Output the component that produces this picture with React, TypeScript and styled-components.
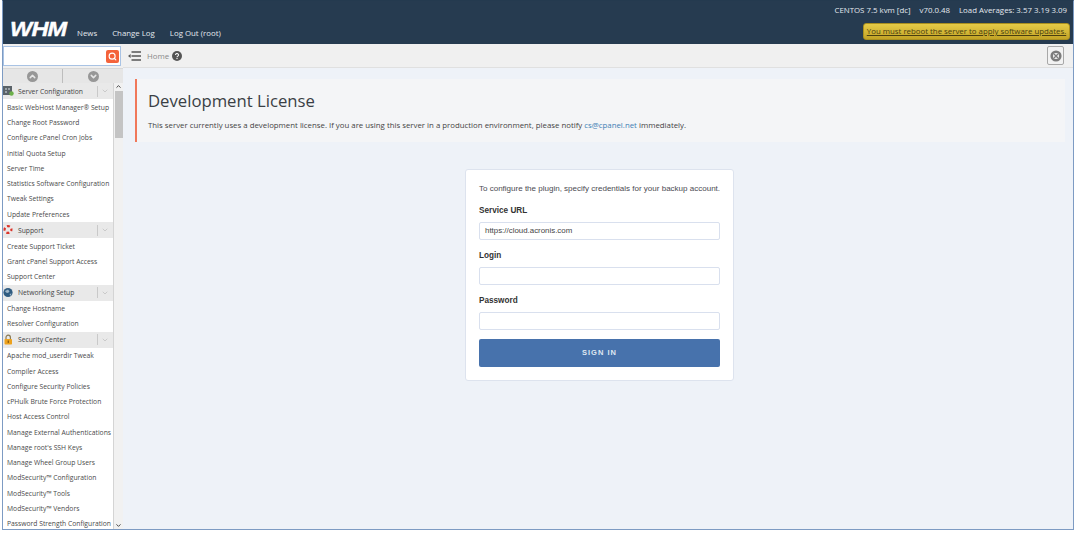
import React from "react";
import styled, { createGlobalStyle } from "styled-components";
import { Search, ChevronUp, ChevronDown } from "lucide-react";

const Global = createGlobalStyle`
  html, body { margin: 0; padding: 0; background: #fff; overflow: hidden; }
  * { box-sizing: border-box; }
`;

const Frame = styled.div`
  margin-left: 2px;
  width: 1072px;
  height: 530px;
  border: 1px solid #7d9bc3;
  border-top-color: #243a4f;
  display: flex;
  flex-direction: column;
  font-family: "Open Sans", sans-serif;
  overflow: hidden;
  background: #eef2f8;
`;

const Header = styled.header`
  height: 43px;
  flex: none;
  background: #263b50;
  display: flex;
  justify-content: space-between;
  padding: 0 3px 0 7px;
  color: #e8edf2;
`;
const Brand = styled.div`
  display: flex;
  align-items: flex-end;
  padding-bottom: 5px;
`;
const Logo = styled.span`
  font-family: "Liberation Sans", sans-serif;
  font-style: italic;
  font-weight: 700;
  font-size: 21px;
  line-height: 24px;
  color: #fff;
  display: inline-block;
  width: 57px;
  letter-spacing: -0.7px;
  margin-right: 10px;
  margin-bottom: -2px;
  -webkit-text-stroke: 0.4px #fff;
  transform: scaleX(1.12);
  transform-origin: left center;
`;
const NavLink = styled.a`
  font-size: 7.85px;
  line-height: 12px;
  margin-right: 15px;
  color: #e3e8ee;
`;
const HeaderRight = styled.div`
  display: flex;
  flex-direction: column;
  align-items: flex-end;
  padding-top: 3px;
`;
const Stats = styled.div`
  font-size: 7.85px;
  line-height: 12px;
  padding-right: 3px;
  display: flex;
  gap: 9px;
  color: #e3e8ee;
`;
const Notice = styled.a`
  margin-top: 7px;
  height: 17px;
  width: 207px;
  border-radius: 3px;
  border: 1px solid #a98f1f;
  background: linear-gradient(#e6cb47, #c2a326);
  color: #4a3f10;
  font-size: 7.85px;
  line-height: 15px;
  text-decoration: underline;
  text-align: center;
  white-space: nowrap;
`;

const Body = styled.div`
  flex: 1;
  min-height: 0;
  display: flex;
`;
const Sidebar = styled.aside`
  width: 120px;
  flex: none;
  display: flex;
  flex-direction: column;
  background: #f2f2f2;
`;
const SearchRow = styled.div`
  height: 24px;
  flex: none;
  padding: 2px 3px 2px 0;
  background: #f0f0f0;
`;
const SearchBox = styled.div`
  height: 20px;
  background: #fff;
  border: 1px solid #a9c3e4;
  display: flex;
  align-items: center;
  justify-content: flex-end;
  padding-right: 1px;
  width: 118px;
`;
const SearchButton = styled.span`
  width: 13px;
  height: 13px;
  border-radius: 2px;
  background: #f4623a;
  color: #fff;
  display: flex;
  align-items: center;
  justify-content: center;
`;
const CollapseBar = styled.div`
  height: 15px;
  flex: none;
  display: grid;
  grid-template-columns: 59px 61px;
  background: #e6e6e6;
  border-top: 1px solid #d8d8d8;
`;
const CollapseCell = styled.div<{ $divider?: boolean }>`
  display: flex;
  align-items: center;
  justify-content: center;
  border-left: ${(p) => (p.$divider ? "1px solid #bdbdbd" : "none")};
`;
const Round = styled.span`
  width: 11px;
  height: 11px;
  border-radius: 50%;
  background: #979797;
  color: #e6e6e6;
  display: flex;
  align-items: center;
  justify-content: center;
`;
const ListWrap = styled.div`
  flex: 1;
  min-height: 0;
  display: flex;
`;
const List = styled.nav`
  width: 111px;
  flex: none;
  background: #fff;
  border-right: 1px solid #d4d4d4;
  overflow: hidden;
`;
const Track = styled.div`
  width: 9px;
  flex: none;
  background: #f1f1f1;
  display: flex;
  flex-direction: column;
  align-items: center;
  color: #333;
`;
const Thumb = styled.div`
  width: 8px;
  height: 47px;
  background: #c4c4c4;
  margin-top: 1px;
`;
const TrackGap = styled.div`
  flex: 1;
`;
const GroupHead = styled.div`
  height: 16px;
  display: flex;
  align-items: center;
  background: #e9e9e9;
  color: #444;
  font-size: 6.75px;
  position: relative;
  padding-left: 15px;
  padding-right: 1px;
  margin-top: 0.3px;
  margin-bottom: 0.5px;
  white-space: nowrap;
`;
const GroupIcon = styled.span`
  position: absolute;
  left: 0;
  top: 2px;
  width: 11px;
  height: 11px;
  display: flex;
`;
const GroupChevron = styled.span`
  margin-left: auto;
  width: 15px;
  height: 11px;
  border-left: 1px solid #c9c9c9;
  display: flex;
  align-items: center;
  justify-content: center;
  color: #aaa;
`;
const Item = styled.a`
  display: block;
  height: 15.25px;
  line-height: 15.25px;
  font-size: 6.75px;
  padding-left: 4px;
  color: #4a4a4a;
  white-space: nowrap;
`;

const Main = styled.main`
  flex: 1;
  min-width: 0;
  display: flex;
  flex-direction: column;
`;
const Crumbs = styled.div`
  height: 24px;
  flex: none;
  background: #f0f0f0;
  border-bottom: 1px solid #e0e0e0;
  display: flex;
  align-items: center;
  padding: 0 9px 0 5px;
`;
const CrumbHome = styled.span`
  font-size: 7.85px;
  color: #8a8a8a;
  margin-left: 6px;
  margin-right: 3px;
`;
const CloseBtn = styled.span`
  margin-left: auto;
  width: 17px;
  height: 19px;
  border: 1px solid #a8a8a8;
  border-radius: 2px;
  background: #f2f2f2;
  display: flex;
  align-items: center;
  justify-content: center;
`;
const Content = styled.div`
  padding: 11px 8px 0 12px;
  flex: 1;
`;
const Banner = styled.section`
  height: 63px;
  background: #f4f5f7;
  border-left: 2px solid #f0785a;
  padding: 10px 0 0 11px;
  color: #333;
`;
const Title = styled.h1`
  margin: 0;
  font-weight: 400;
  font-size: 16.7px;
  line-height: 24px;
  color: #3a3f45;
`;
const BannerText = styled.p`
  margin: 6px 0 0;
  font-size: 7.83px;
  line-height: 12px;
  color: #444;
`;
const Mail = styled.a`
  color: #3f7fb5;
`;
const Card = styled.form`
  margin: 27px 0 0 330px;
  width: 269px;
  height: 212px;
  background: #fff;
  border: 1px solid #dde3ee;
  border-radius: 3px;
  padding: 13px 13px 0;
  font-family: "Liberation Sans", sans-serif;
`;
const Hint = styled.p`
  margin: 0;
  font-size: 8.03px;
  line-height: 12px;
  color: #4a4a52;
  white-space: nowrap;
`;
const Label = styled.div<{ $first?: boolean }>`
  margin-top: ${(p) => (p.$first ? "8.5px" : "8.5px")};
  font-size: 8.2px;
  line-height: 13px;
  font-weight: 700;
  color: #333;
`;
const Field = styled.div`
  margin-top: 5.5px;
  height: 18px;
  border: 1px solid #d9e0ee;
  border-radius: 2px;
  background: #fff;
  font-size: 7.9px;
  line-height: 16px;
  padding-left: 5px;
  color: #444;
`;
const Submit = styled.button`
  display: block;
  width: 100%;
  height: 27.5px;
  margin-top: 9px;
  border: none;
  border-radius: 2px;
  background: #4772ac;
  color: #dfe7f2;
  font-family: "Liberation Sans", sans-serif;
  font-size: 7.5px;
  font-weight: 700;
  letter-spacing: 1px;
  padding: 0;
`;

const GridIcon = () => (
  <svg width="11" height="11" viewBox="0 0 11 11">
    <rect x="0" y="1" width="9" height="9" fill="#5a6268" />
    <rect x="2" y="3" width="2" height="2" fill="#9aa2a8" />
    <rect x="5" y="3" width="2" height="2" fill="#9aa2a8" />
    <rect x="2" y="6" width="2" height="2" fill="#9aa2a8" />
    <circle cx="8.5" cy="8.5" r="2.2" fill="#6cb04a" />
  </svg>
);
const BuoyIcon = () => (
  <svg width="11" height="11" viewBox="0 0 11 11">
    <circle cx="5" cy="5.5" r="3.4" fill="none" stroke="#efe6e6" strokeWidth="2.2" />
    <circle cx="5" cy="5.5" r="3.4" fill="none" stroke="#d9352b" strokeWidth="2.2" strokeDasharray="3 2.34" strokeDashoffset="1.5" />
  </svg>
);
const GlobeIcon = () => (
  <svg width="11" height="11" viewBox="0 0 11 11">
    <circle cx="5" cy="5.5" r="4.6" fill="#2f5b80" />
    <path d="M2 4 L5 2.5 L6.5 4.5 L5 6 L3 5.5 Z" fill="#9fb6c8" />
    <path d="M6.5 7 L8.5 6.5 L7.5 9 Z" fill="#9fb6c8" />
  </svg>
);
const LockIcon = () => (
  <svg width="11" height="11" viewBox="0 0 11 11">
    <path d="M3 5 V3.4 a2.2 2.2 0 0 1 4.4 0 V5" fill="none" stroke="#8a7a55" strokeWidth="1.2" />
    <rect x="1.5" y="5" width="7.5" height="5.5" rx="0.8" fill="#eda21e" />
    <rect x="4.7" y="6.5" width="1.1" height="2.4" fill="#7a4e08" />
  </svg>
);
const MenuIcon = () => (
  <svg width="13" height="10" viewBox="0 0 13 10">
    <path d="M3.5 1 H13 M3.5 5 H13 M3.5 9 H13" stroke="#555" strokeWidth="1.4" />
    <path d="M0 5 L2.6 3 V7 Z" fill="#555" />
  </svg>
);
const HelpIcon = () => (
  <svg width="10" height="10" viewBox="0 0 10 10">
    <circle cx="5" cy="5" r="5" fill="#555" />
    <path d="M3.5 3.9 a1.5 1.4 0 1 1 2.3 1.2 c-0.6 0.4 -0.8 0.6 -0.8 1.2" fill="none" stroke="#fff" strokeWidth="1.1" />
    <rect x="4.45" y="7" width="1.1" height="1.1" fill="#fff" />
  </svg>
);
const CloseIcon = () => (
  <svg width="12" height="12" viewBox="0 0 12 12">
    <circle cx="6" cy="6" r="4.3" fill="none" stroke="#7c7c7c" strokeWidth="2.6" />
    <path d="M4 4 L8 8 M8 4 L4 8" stroke="#7c7c7c" strokeWidth="1.3" />
  </svg>
);

const groups: { title: string; icon: React.ReactNode; items: string[] }[] = [
  {
    title: "Server Configuration",
    icon: <GridIcon />,
    items: [
      "Basic WebHost Manager® Setup",
      "Change Root Password",
      "Configure cPanel Cron Jobs",
      "Initial Quota Setup",
      "Server Time",
      "Statistics Software Configuration",
      "Tweak Settings",
      "Update Preferences",
    ],
  },
  {
    title: "Support",
    icon: <BuoyIcon />,
    items: ["Create Support Ticket", "Grant cPanel Support Access", "Support Center"],
  },
  {
    title: "Networking Setup",
    icon: <GlobeIcon />,
    items: ["Change Hostname", "Resolver Configuration"],
  },
  {
    title: "Security Center",
    icon: <LockIcon />,
    items: [
      "Apache mod_userdir Tweak",
      "Compiler Access",
      "Configure Security Policies",
      "cPHulk Brute Force Protection",
      "Host Access Control",
      "Manage External Authentications",
      "Manage root's SSH Keys",
      "Manage Wheel Group Users",
      "ModSecurity™ Configuration",
      "ModSecurity™ Tools",
      "ModSecurity™ Vendors",
      "Password Strength Configuration",
    ],
  },
];

export default function App() {
  return (
    <>
      <Global />
      <Frame>
        <Header>
          <Brand>
            <Logo>WHM</Logo>
            <NavLink>News</NavLink>
            <NavLink>Change Log</NavLink>
            <NavLink>Log Out (root)</NavLink>
          </Brand>
          <HeaderRight>
            <Stats>
              <span>CENTOS 7.5 kvm [dc]</span>
              <span>v70.0.48</span>
              <span>Load Averages: 3.57 3.19 3.09</span>
            </Stats>
            <Notice>You must reboot the server to apply software updates.</Notice>
          </HeaderRight>
        </Header>
        <Body>
          <Sidebar>
            <SearchRow>
              <SearchBox>
                <SearchButton>
                  <Search size={9} strokeWidth={3} />
                </SearchButton>
              </SearchBox>
            </SearchRow>
            <CollapseBar>
              <CollapseCell>
                <Round>
                  <ChevronUp size={9} strokeWidth={4} />
                </Round>
              </CollapseCell>
              <CollapseCell $divider>
                <Round>
                  <ChevronDown size={9} strokeWidth={4} />
                </Round>
              </CollapseCell>
            </CollapseBar>
            <ListWrap>
              <List>
                {groups.map((g) => (
                  <div key={g.title}>
                    <GroupHead>
                      <GroupIcon>{g.icon}</GroupIcon>
                      {g.title}
                      <GroupChevron>
                        <ChevronDown size={8} strokeWidth={1.5} />
                      </GroupChevron>
                    </GroupHead>
                    {g.items.map((i) => (
                      <Item key={i}>{i}</Item>
                    ))}
                  </div>
                ))}
              </List>
              <Track>
                <ChevronUp size={7} strokeWidth={3} />
                <Thumb />
                <TrackGap />
                <ChevronDown size={7} strokeWidth={3} />
              </Track>
            </ListWrap>
          </Sidebar>
          <Main>
            <Crumbs>
              <MenuIcon />
              <CrumbHome>Home</CrumbHome>
              <HelpIcon />
              <CloseBtn>
                <CloseIcon />
              </CloseBtn>
            </Crumbs>
            <Content>
              <Banner>
                <Title>Development License</Title>
                <BannerText>
                  This server currently uses a development license. If you are using this server in a production
                  environment, please notify <Mail>cs@cpanel.net</Mail> immediately.
                </BannerText>
              </Banner>
              <Card>
                <Hint>To configure the plugin, specify credentials for your backup account.</Hint>
                <Label $first>Service URL</Label>
                <Field>https://cloud.acronis.com</Field>
                <Label>Login</Label>
                <Field />
                <Label>Password</Label>
                <Field />
                <Submit type="button">SIGN IN</Submit>
              </Card>
            </Content>
          </Main>
        </Body>
      </Frame>
    </>
  );
}
